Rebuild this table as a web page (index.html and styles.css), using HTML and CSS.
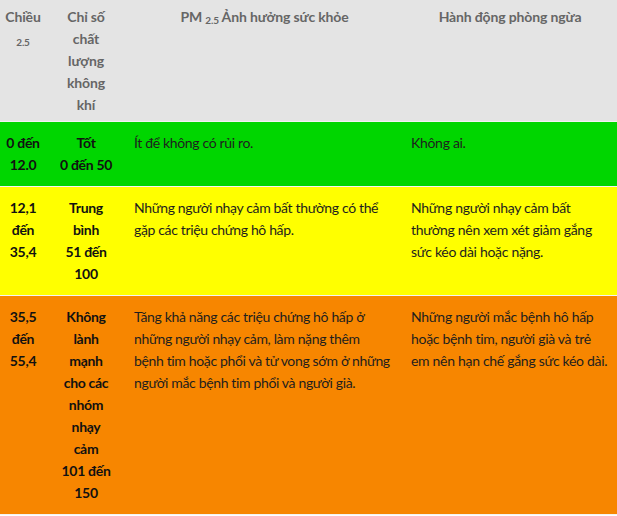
FILE: index.html
```html
<!DOCTYPE html>
<html lang="vi">
<head>
<meta charset="utf-8">
<link rel="stylesheet" href="styles.css">
</head>
<body>
<table class="aqi">
  <colgroup>
    <col class="c1"><col class="c2"><col class="c3"><col class="c4">
  </colgroup>
  <thead>
    <tr>
      <th>Chiều <sub>2.5</sub></th>
      <th>Chỉ số chất lượng không khí</th>
      <th>PM <sub>2.5</sub> Ảnh hưởng sức khỏe</th>
      <th>Hành động phòng ngừa</th>
    </tr>
  </thead>
  <tbody>
    <tr class="good">
      <td class="num">0 đến 12.0</td>
      <td class="num">Tốt<br>0 đến 50</td>
      <td>Ít để không có rủi ro.</td>
      <td>Không ai.</td>
    </tr>
    <tr class="moderate">
      <td class="num">12,1 đến 35,4</td>
      <td class="num">Trung bình<br>51 đến 100</td>
      <td>Những người nhạy cảm bất thường có thể gặp các triệu chứng hô hấp.</td>
      <td>Những người nhạy cảm bất thường nên xem xét giảm gắng sức kéo dài hoặc nặng.</td>
    </tr>
    <tr class="usg">
      <td class="num">35,5 đến 55,4</td>
      <td class="num">Không lành mạnh cho các nhóm nhạy cảm<br>101 đến 150</td>
      <td>Tăng khả năng các triệu chứng hô hấp ở những người nhạy cảm, làm nặng thêm bệnh tim hoặc phổi và tử vong sớm ở những người mắc bệnh tim phổi và người già.</td>
      <td>Những người mắc bệnh hô hấp hoặc bệnh tim, người già và trẻ em nên hạn chế gắng sức kéo dài.</td>
    </tr>
  </tbody>
</table>
</body>
</html>
```
FILE: styles.css
```css
html, body {
  margin: 0;
  padding: 0;
  background: #ffffff;
}
body {
  font-family: "Lato", "Noto Sans", sans-serif;
  font-size: 14px;
  line-height: 22px;
  letter-spacing: -0.3px;
  color: #1e1e1e;
}
.aqi {
  width: 617px;
  border-collapse: collapse;
  table-layout: fixed;
}
.c1 { width: 46px; }
.c2 { width: 80px; }
.c3 { width: 277px; }
.c4 { width: 214px; }
.aqi th {
  background: #e4e4e4;
  color: #666666;
  font-weight: 700;
  font-size: 14px;
  letter-spacing: -0.15px;
  text-align: center;
  vertical-align: top;
  padding: 6px 8px 5px;
  border-bottom: 1px solid #f2f2f2;
}
.aqi th:first-child,
.aqi td:first-child {
  padding-left: 4px;
  padding-right: 4px;
}
.aqi th:nth-child(2),
.aqi td:nth-child(2) {
  padding-left: 13px;
  padding-right: 13px;
}
.aqi td:nth-child(3) {
  padding-right: 12px;
  letter-spacing: -0.35px;
}
.aqi sub {
  font-size: 10px;
  vertical-align: -2px;
  line-height: 0;
}
.aqi td {
  vertical-align: top;
  padding: 10px 8px;
  border-bottom: 1px solid #f4f4f4;
  text-align: left;
}
.aqi td.num {
  text-align: center;
  font-weight: 700;
  color: #111111;
}
.good td { background: #00d600; }
.moderate td { background: #ffff00; }
.usg td { background: #f78600; }
```
